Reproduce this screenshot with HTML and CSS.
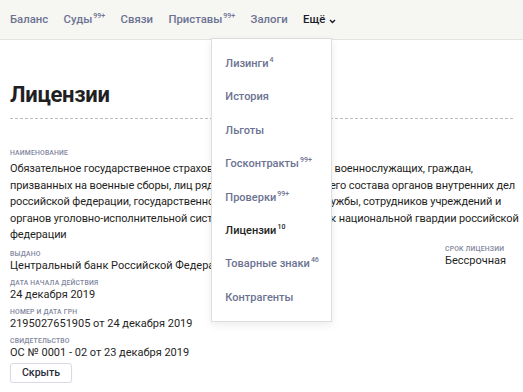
FILE: index.html
```html
<!DOCTYPE html>
<html lang="ru">
  <head>
    <meta charset="UTF-8" />
    <title>Лицензии</title>
    <link rel="stylesheet" href="styles.css">
  </head>
  <body>
    <header class="top-bar">
      <nav class="tabs">
        <a class="tab" href="#">Баланс</a>
        <a class="tab" href="#">Суды<sup class="count">99+</sup></a>
        <a class="tab" href="#">Связи</a>
        <a class="tab" href="#">Приставы<sup class="count">99+</sup></a>
        <a class="tab" href="#">Залоги</a>
        <div class="tab more">
          <span class="more-label">Ещё
            <svg class="chevron" width="7" height="5" viewBox="0 0 7 5"><path d="M1 1l2.5 2.5L6 1" fill="none" stroke="currentColor" stroke-width="1.4"/></svg>
          </span>
          <ul class="dropdown">
            <li><a href="#">Лизинги<sup class="count">4</sup></a></li>
            <li><a href="#">История</a></li>
            <li><a href="#">Льготы</a></li>
            <li><a href="#">Госконтракты<sup class="count">99+</sup></a></li>
            <li><a href="#">Проверки<sup class="count">99+</sup></a></li>
            <li><a class="current" href="#">Лицензии<sup class="count">10</sup></a></li>
            <li><a href="#">Товарные знаки<sup class="count">46</sup></a></li>
            <li><a href="#">Контрагенты</a></li>
          </ul>
        </div>
      </nav>
    </header>

    <main class="page">
      <h1 class="page-title">Лицензии</h1>

      <section class="license">
        <div class="field">
          <div class="label">Наименование</div>
          <div class="value text">Обязательное государственное страхование жизни и здоровья военнослужащих, граждан,<br>призванных на военные сборы, лиц рядового и начальствующего состава органов внутренних дел<br>российской федерации, государственной противопожарной службы, сотрудников учреждений и<br>органов уголовно-исполнительной системы, сотрудников войск национальной гвардии российской<br>федерации</div>
        </div>

        <div class="columns">
          <div class="col main-col">
            <div class="field">
              <div class="label">Выдано</div>
              <div class="value">Центральный банк Российской Федерации</div>
            </div>
            <div class="field">
              <div class="label">Дата начала действия</div>
              <div class="value">24 декабря 2019</div>
            </div>
            <div class="field">
              <div class="label">Номер и дата ГРН</div>
              <div class="value">2195027651905 от 24 декабря 2019</div>
            </div>
            <div class="field">
              <div class="label">Свидетельство</div>
              <div class="value">ОС № 0001 - 02 от 23 декабря 2019</div>
            </div>
          </div>
          <div class="col side">
            <div class="field">
              <div class="label">Срок лицензии</div>
              <div class="value">Бессрочная</div>
            </div>
          </div>
        </div>

        <button class="btn" type="button">Скрыть</button>
      </section>
    </main>
  </body>
</html>
```

FILE: styles.css
```css
* {
  margin: 0;
  padding: 0;
  box-sizing: border-box;
}

body {
  font-family: Roboto, "Noto Sans", sans-serif;
  color: #1f1f24;
  background: #fff;
  font-size: 11px;
  line-height: 1.4;
}

/* Header */
.top-bar {
  height: 40px;
  background: #f6f6f2;
  border-bottom: 1px solid #e4e4df;
  padding: 0 10px;
}

.tabs {
  display: flex;
  align-items: center;
  height: 100%;
  gap: 15.5px;
  padding-top: 1px;
}

.tab {
  color: #6c7392;
  text-decoration: none;
  font-weight: 500;
  font-size: 11.3px;
}

.count {
  font-size: 7px;
  font-weight: 500;
  margin-left: 1px;
  vertical-align: 5px;
  line-height: 0;
}

.more {
  position: relative;
}

.more-label {
  color: #1a1d2b;
  display: flex;
  align-items: center;
  gap: 4px;
}

.chevron {
  margin-top: 2px;
}

/* Dropdown */
.dropdown {
  position: absolute;
  right: 4px;
  top: 26px;
  width: 121px;
  height: 284px;
  list-style: none;
  background: #fff;
  border: 1px solid #dedede;
  box-shadow: 0 3px 8px rgba(0, 0, 0, 0.08);
  padding: 17px 0 0 13px;
  z-index: 10;
}

.dropdown li {
  height: 33.4px;
}

.dropdown a {
  color: #6c7392;
  text-decoration: none;
  font-size: 11px;
  font-weight: 500;
}

.dropdown a.current {
  color: #1f1f24;
}

/* Page */
.page {
  padding: 0 10px;
}

.page-title {
  font-size: 22px;
  font-weight: 700;
  letter-spacing: -0.3px;
  line-height: 28px;
  padding: 41px 0 9px;
  border-bottom: 1px dashed #bdbdbd;
}

.license {
  padding-top: 30px;
}

.label {
  font-size: 6.8px;
  font-weight: 500;
  text-transform: uppercase;
  color: #81869e;
  letter-spacing: 0.2px;
  line-height: 8px;
}

.value {
  font-size: 11px;
  line-height: 16px;
}

.text {
  white-space: nowrap;
  letter-spacing: -0.12px;
  line-height: 16.5px;
  margin-top: 4px;
}

.columns {
  display: flex;
  justify-content: space-between;
  align-items: flex-start;
  margin-top: 1px;
}

.main-col {
  display: flex;
  flex-direction: column;
  gap: 5px;
  padding-top: 5px;
}

.side {
  width: 68px;
}

.btn {
  margin-top: 2px;
  font-family: inherit;
  font-size: 10.5px;
  font-weight: 500;
  color: #2a2d3c;
  background: #fff;
  border: 1px solid #d8dbe6;
  border-radius: 3px;
  width: 62px;
  height: 20px;
  box-shadow: 0 1px 2px rgba(0, 0, 0, 0.06);
}
```
